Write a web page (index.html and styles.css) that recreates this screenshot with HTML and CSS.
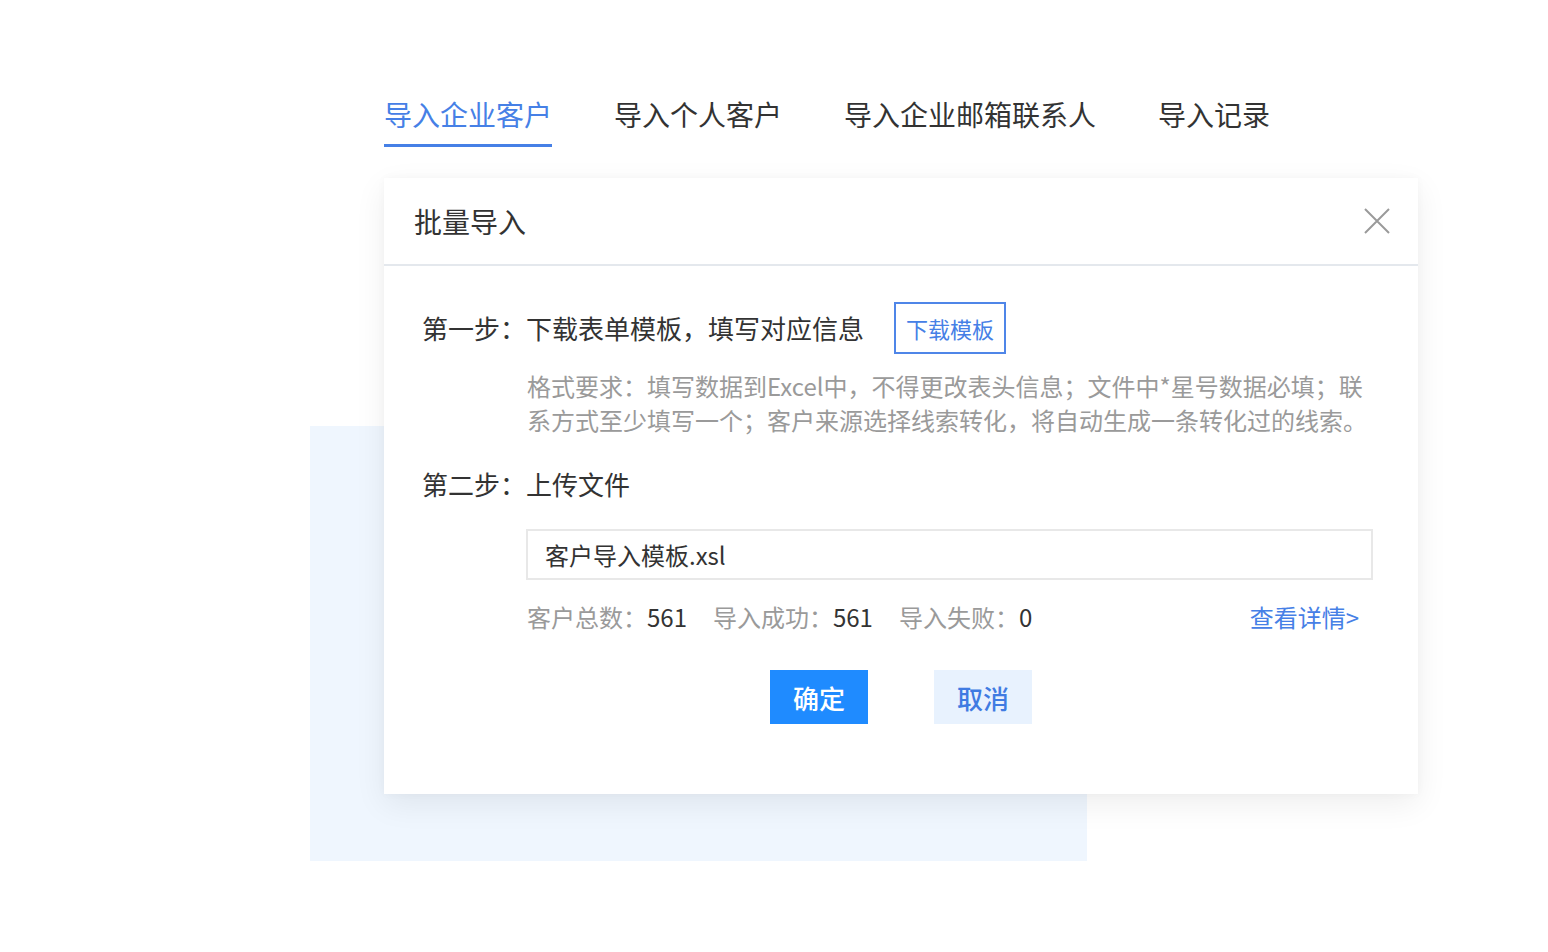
FILE: index.html
```html
<!DOCTYPE html>
<html lang="zh-CN">
<head>
    <meta charset="UTF-8">
    <meta name="viewport" content="width=device-width, initial-scale=1.0">
    <title>批量导入</title>
    <link rel="stylesheet" href="styles.css">
</head>
<body>
    <div class="page">
        <div class="stage">
            <div class="backdrop"></div>

            <nav class="tabs">
                <a class="tab active">导入企业客户</a>
                <a class="tab">导入个人客户</a>
                <a class="tab">导入企业邮箱联系人</a>
                <a class="tab">导入记录</a>
            </nav>

            <section class="dialog">
                <div class="dialog-header">
                    <h2 class="dialog-title">批量导入</h2>
                    <button class="close-button" aria-label="关闭">
                        <svg width="26" height="26" viewBox="0 0 26 26">
                            <path d="M1 1 L25 25 M25 1 L1 25" stroke="#9a9a9a" stroke-width="2" fill="none"/>
                        </svg>
                    </button>
                </div>

                <div class="dialog-body">
                    <div class="step-row">
                        <span class="step-label">第一步：下载表单模板，填写对应信息</span>
                        <button class="outline-button">下载模板</button>
                    </div>
                    <p class="step-desc">格式要求：填写数据到Excel中，不得更改表头信息；文件中*星号数据必填；联系方式至少填写一个；客户来源选择线索转化，将自动生成一条转化过的线索。</p>

                    <div class="step-row step-two">
                        <span class="step-label">第二步：上传文件</span>
                    </div>

                    <div class="file-box">客户导入模板.xsl</div>

                    <div class="stats">
                        <span class="stat"><span class="stat-label">客户总数：</span>561</span>
                        <span class="stat"><span class="stat-label">导入成功：</span>561</span>
                        <span class="stat"><span class="stat-label">导入失败：</span>0</span>
                        <a class="detail-link">查看详情&gt;</a>
                    </div>

                    <div class="actions">
                        <button class="btn btn-primary">确定</button>
                        <button class="btn btn-light">取消</button>
                    </div>
                </div>
            </section>
        </div>
    </div>
</body>
</html>
```

FILE: styles.css
```css
* {
    margin: 0;
    padding: 0;
    box-sizing: border-box;
}

body {
    font-family: "Noto Sans CJK SC", "Noto Sans", sans-serif;
    background: #ffffff;
    color: #333333;
    width: 1548px;
    height: 952px;
    overflow: hidden;
}

.page {
    padding: 94px 0 0 384px;
}

.stage {
    position: relative;
    width: 1034px;
}

/* decorative light panel behind the dialog */
.backdrop {
    position: absolute;
    left: -74px;
    top: 332px;
    width: 777px;
    height: 435px;
    background: #eff6fe;
    z-index: 0;
}

.tabs {
    display: flex;
    gap: 62px;
}

.tab {
    font-size: 28px;
    line-height: 40px;
    color: #333333;
    padding-bottom: 10px;
    border-bottom: 3px solid transparent;
    cursor: pointer;
}

.tab.active {
    color: #4680e6;
    border-bottom-color: #4680e6;
}

.dialog {
    position: relative;
    z-index: 1;
    margin-top: 31px;
    background: #ffffff;
    box-shadow: 0 10px 30px rgba(0, 0, 0, 0.07), 0 0 8px rgba(0, 0, 0, 0.03);
}

.dialog-header {
    height: 88px;
    display: flex;
    align-items: center;
    justify-content: space-between;
    padding: 0 28px 0 30px;
    border-bottom: 2px solid #e4e8ed;
}

.dialog-title {
    font-size: 28px;
    font-weight: 400;
    line-height: 40px;
    color: #333333;
}

.close-button {
    background: none;
    border: none;
    width: 26px;
    height: 26px;
    cursor: pointer;
    display: flex;
}

.dialog-body {
    padding: 36px 45px 70px 38px;
}

.step-row {
    display: flex;
    align-items: center;
    gap: 30px;
}

.step-label {
    font-size: 26px;
    line-height: 36px;
    color: #333333;
}

.outline-button {
    font-family: inherit;
    font-size: 22px;
    line-height: 30px;
    color: #4680e6;
    background: #ffffff;
    border: 2px solid #4f86e8;
    height: 52px;
    padding: 0 10px;
    cursor: pointer;
}

.step-desc {
    margin: 15px 0 0 105px;
    width: 846px;
    font-size: 24px;
    line-height: 34px;
    color: #9a9a9a;
}

.step-two {
    margin-top: 29px;
}

.file-box {
    margin: 27px 0 0 104px;
    width: 847px;
    height: 51px;
    border: 2px solid #e8e8e8;
    padding: 0 17px;
    display: flex;
    align-items: center;
    font-size: 24px;
    color: #333333;
}

.stats {
    margin: 20px 0 0 105px;
    width: 846px;
    display: flex;
    align-items: center;
    gap: 26px;
    font-size: 24px;
    line-height: 34px;
    color: #333333;
    padding-right: 14px;
}

.stat-label {
    color: #9a9a9a;
}

.detail-link {
    margin-left: auto;
    color: #4680e6;
    cursor: pointer;
}

.actions {
    margin-top: 36px;
    display: flex;
    justify-content: center;
    gap: 66px;
    padding-left: 7px;
}

.btn {
    font-family: inherit;
    width: 98px;
    height: 54px;
    font-size: 26px;
    font-weight: 500;
    border: none;
    cursor: pointer;
}

.btn-primary {
    background: #1f8bff;
    color: #ffffff;
}

.btn-light {
    background: #e8f2fe;
    color: #3f7be2;
}
```
